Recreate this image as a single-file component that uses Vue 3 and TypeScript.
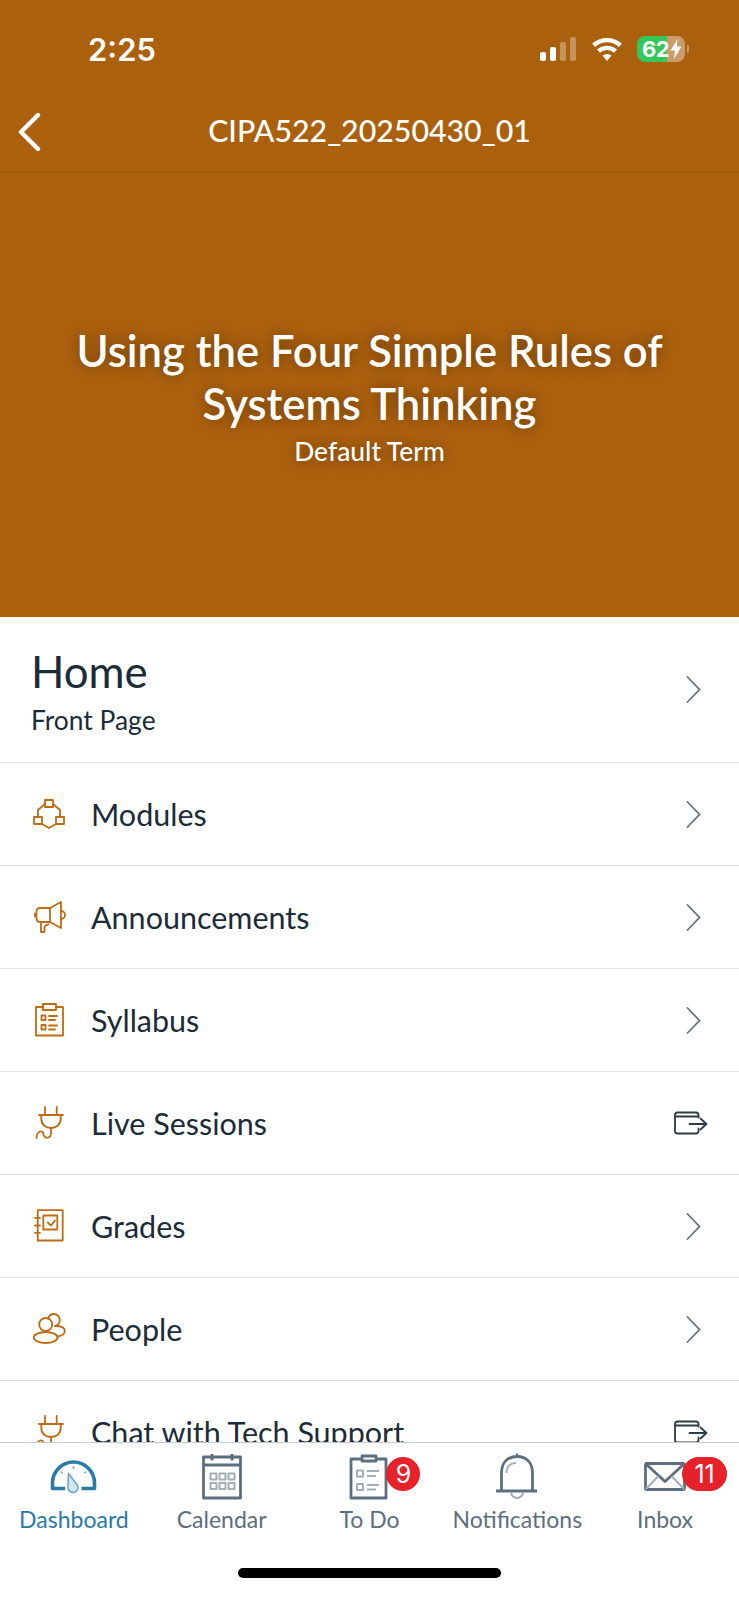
<template>
  <div class="screen">
    <header class="course-head">
      <!-- 状态栏 -->
      <div class="status-bar">
        <span class="clock">2:25</span>
        <div class="status-icons">
          <div class="signal">
            <i class="bar b1"></i>
            <i class="bar b2"></i>
            <i class="bar b3 dim"></i>
            <i class="bar b4 dim"></i>
          </div>
          <svg class="wifi" viewBox="0 0 32 24" width="32" height="24">
            <path d="M16 24 L11.5 18.6 A7 7 0 0 1 20.5 18.6 Z" fill="#fff" />
            <path d="M7.5 14.2 A12.4 12.4 0 0 1 24.5 14.2" class="wifi-arc" />
            <path d="M2.6 8.4 A19.6 19.6 0 0 1 29.4 8.4" class="wifi-arc" />
          </svg>
          <div class="battery">
            <span class="battery-num">62</span>
            <svg class="bolt" viewBox="0 0 12 20" width="12" height="20">
              <path d="M7.5 0 L0.5 11.5 H5 L4 20 L11.5 7.5 H6.8 Z" fill="#fff" />
            </svg>
          </div>
          <i class="battery-nub"></i>
        </div>
      </div>

      <!-- 导航栏 -->
      <nav class="nav-bar">
        <svg class="back" viewBox="0 0 26 40" width="26" height="40">
          <path d="M22 3 L5 20 L22 37" />
        </svg>
        <span class="nav-title">CIPA522_20250430_01</span>
      </nav>

      <div class="hero">
        <h1 class="hero-title">Using the Four Simple Rules of Systems Thinking</h1>
        <p class="hero-term">Default Term</p>
      </div>
    </header>

    <main class="menu">
      <div class="home-row">
        <div class="home-text">
          <div class="home-title">Home</div>
          <div class="home-sub">Front Page</div>
        </div>
        <svg class="chevron" viewBox="0 0 15 27" width="15" height="27">
          <path d="M1.5 1 L13.5 13.5 L1.5 26" />
        </svg>
      </div>

      <div v-for="row in rows" :key="row.label" class="menu-row">
        <svg class="row-icon" viewBox="0 0 36 36" width="36" height="36">
          <path v-for="d in row.icon" :key="d" :d="d" />
        </svg>
        <span class="row-label">{{ row.label }}</span>
        <svg v-if="row.external" class="external" viewBox="0 0 34 24" width="34" height="24">
          <path d="M24.5 6.5 V4 Q24.5 1.5 22 1.5 H3.5 Q1 1.5 1 4 V20 Q1 22.5 3.5 22.5 H22 Q24.5 22.5 24.5 20 V17.5" />
          <path d="M1 5.5 H24.5" />
          <path d="M15.5 13 H32" />
          <path d="M26.5 7.5 L32.5 13 L26.5 18.5" />
        </svg>
        <svg v-else class="chevron" viewBox="0 0 15 27" width="15" height="27">
          <path d="M1.5 1 L13.5 13.5 L1.5 26" />
        </svg>
      </div>
    </main>

    <footer class="tab-bar">
      <div class="tabs">
        <div v-for="tab in tabs" :key="tab.label" class="tab" :class="{ active: tab.active }">
          <svg class="tab-icon" viewBox="0 0 60 50" width="60" height="50">
            <path v-for="p in tab.paths" :key="p.d" :d="p.d" :class="p.cls" />
          </svg>
          <span class="tab-label">{{ tab.label }}</span>
          <span v-if="tab.badge" class="badge" :class="{ wide: tab.badge > 9 }">{{ tab.badge }}</span>
        </div>
      </div>
      <div class="home-indicator"></div>
    </footer>
  </div>
</template>

<script setup lang="ts">
interface MenuRow {
  label: string
  icon: string[]
  external?: boolean
}

interface TabPath {
  d: string
  cls: string
}

interface Tab {
  label: string
  active?: boolean
  badge?: number
  paths: TabPath[]
}

const plugIcon = [
  'M14 2 V10',
  'M25.7 2 V10',
  'M8 10 H32',
  'M10.3 10 V14 C10.3 20 15 23 20 23 C25 23 29.7 20 29.7 14 V10',
  'M20 23 V28 C20 34 13 34 12.5 29 C12 25 6 25 5.5 33'
]

const rows: MenuRow[] = [
  {
    label: 'Modules',
    icon: [
      'M14 4 H22 V11 H14 Z',
      'M3 21 H11 V28 H3 Z',
      'M25 21 H33 V28 H25 Z',
      'M14 8 L7 14 V21',
      'M22 8 L29 14 V21',
      'M11 28 L18 32 L25 28'
    ]
  },
  {
    label: 'Announcements',
    icon: [
      'M19 9 H9 Q5.5 9 5.5 13 V19 Q5.5 23 9 23 H19 Z',
      'M19 9 L30 3 V29 L19 23',
      'M10 23 V33 H13.5 V29 Q13.5 26 17.5 25.5',
      'M30 12 A4 4 0 0 1 30 20',
      'M4 14.5 V17.5'
    ]
  },
  {
    label: 'Syllabus',
    icon: [
      'M12 5 H5 V33.5 H32 V5 H25',
      'M12 2 H25 V8 H12 Z',
      'M10.5 13.5 H14.5 V18 H10.5 Z',
      'M10.5 23 H14.5 V27.5 H10.5 Z',
      'M18 14 H26',
      'M18 18 H24',
      'M18 23.5 H26',
      'M18 27.5 H24'
    ]
  },
  { label: 'Live Sessions', icon: plugIcon, external: true },
  {
    label: 'Grades',
    icon: [
      'M6.7 2.2 H31.7 V32.5 H6.7 Z',
      'M12.3 7.5 H26.3 V21.5 H12.3 Z',
      'M4 9.8 H9',
      'M4 17.5 H9',
      'M4 24.8 H9',
      'M16.7 14.5 L20 17.5 L24 12.5'
    ]
  },
  {
    label: 'People',
    icon: [
      'M21.2 13.5 A6.5 6.5 0 1 1 8.2 13.5 A6.5 6.5 0 1 1 21.2 13.5 Z',
      'M14.7 21 C21 21 26.7 23.5 26.7 26.5 C26.7 29.5 21 32 14.7 32 C8.4 32 2.7 29.5 2.7 26.5 C2.7 23.5 8.4 21 14.7 21 Z',
      'M17 7.5 C18 4.5 20.5 3 23 3 C26.5 3 28.8 5.8 28.8 9 C28.8 12 27 14 24.5 14.8',
      'M24 15 C30 15 33.8 17 33.8 20 C33.8 23 30 25 26 25.6'
    ]
  },
  { label: 'Chat with Tech Support', icon: plugIcon, external: true }
]

const tabs: Tab[] = [
  {
    label: 'Dashboard',
    active: true,
    paths: [
      { d: 'M21 36.5 H8.5 V31 A21 21 0 0 1 50.5 31 V36.5 H37.5', cls: 'heavy arc' },
      { d: 'M29.5 14 V17', cls: 'tick' },
      { d: 'M17 19.5 L18.8 21.5', cls: 'tick' },
      { d: 'M42 19.5 L40.2 21.5', cls: 'tick' },
      { d: 'M24.5 21.5 L33.6 33.5 A5 5 0 1 1 24 35 Z', cls: 'needle' }
    ]
  },
  {
    label: 'Calendar',
    paths: [
      { d: 'M11.5 5 H48.5 V46 H11.5 Z', cls: 'heavy' },
      { d: 'M11.5 13 H48.5', cls: 'heavy' },
      { d: 'M20 2 V8.5', cls: 'heavy' },
      { d: 'M40 2 V8.5', cls: 'heavy' },
      { d: 'M18.5 21.5 H24.5 V27.5 H18.5 Z', cls: 'soft' },
      { d: 'M27.5 21.5 H33.5 V27.5 H27.5 Z', cls: 'soft' },
      { d: 'M36.5 21.5 H42.5 V27.5 H36.5 Z', cls: 'soft' },
      { d: 'M18.5 31 H24.5 V37 H18.5 Z', cls: 'soft' },
      { d: 'M27.5 31 H33.5 V37 H27.5 Z', cls: 'soft' },
      { d: 'M36.5 31 H42.5 V37 H36.5 Z', cls: 'soft' }
    ]
  },
  {
    label: 'To Do',
    badge: 9,
    paths: [
      { d: 'M23 7 H12 V46 H47 V7 H37', cls: 'heavy' },
      { d: 'M23 7 V4 H37 V9 H23 Z', cls: 'heavy' },
      { d: 'M18 18.5 H24 V24.5 H18 Z', cls: 'soft' },
      { d: 'M18 32 H24 V38 H18 Z', cls: 'soft' },
      { d: 'M28 19 H40', cls: 'soft' },
      { d: 'M28 24 H37', cls: 'soft' },
      { d: 'M28 33 H40', cls: 'soft' },
      { d: 'M28 37.5 H37', cls: 'soft' }
    ]
  },
  {
    label: 'Notifications',
    paths: [
      { d: 'M9 39 H50', cls: 'heavy' },
      { d: 'M14.5 39 V21 C14.5 10 21 4.5 30 4.5 C39 4.5 45.5 10 45.5 21 V39', cls: 'heavy' },
      { d: 'M30 1.5 V4', cls: 'thin' },
      { d: 'M19.5 21 C19.5 15 23 11 29 11', cls: 'soft' },
      { d: 'M24 40 A6 6 0 0 0 36 40', cls: 'soft' }
    ]
  },
  {
    label: 'Inbox',
    badge: 11,
    paths: [
      { d: 'M12 11.5 H48 Q49.5 11.5 49.5 13 V36 Q49.5 37.5 48 37.5 H12 Q10.5 37.5 10.5 36 V13 Q10.5 11.5 12 11.5 Z', cls: 'heavy' },
      { d: 'M11 12 L30 29.5 L49 12', cls: 'heavy' },
      { d: 'M11 37 L23.5 24', cls: 'soft' },
      { d: 'M49 37 L36.5 24', cls: 'soft' }
    ]
  }
]
</script>

<style scoped>
.screen {
  width: 739px;
  height: 1600px;
  display: flex;
  flex-direction: column;
  overflow: hidden;
  background: #ffffff;
  font-family: Lato, 'Noto Sans', sans-serif;
}

/* 顶部棕色区域 */
.course-head {
  background: #ab600e;
  color: #ffffff;
  flex-shrink: 0;
}

.status-bar {
  height: 98px;
  display: flex;
  align-items: center;
  justify-content: space-between;
  padding: 0 50px 0 88px;
}

.clock {
  font-family: Inter, 'Liberation Sans', sans-serif;
  font-size: 31px;
  font-weight: 600;
}

.status-icons {
  display: flex;
  align-items: center;
}

.signal {
  display: flex;
  align-items: flex-end;
  gap: 4px;
  height: 24px;
  margin-right: 15px;
}

.bar {
  width: 6px;
  background: #ffffff;
  border-radius: 2px;
}

.bar.dim {
  background: rgba(255, 255, 255, 0.32);
}

.b1 { height: 9px; }
.b2 { height: 14px; }
.b3 { height: 19px; }
.b4 { height: 24px; }

.wifi-arc {
  fill: none;
  stroke: #ffffff;
  stroke-width: 4.4;
}

.battery {
  width: 48px;
  height: 26px;
  margin-left: 14px;
  border-radius: 8px;
  display: flex;
  align-items: center;
  padding-left: 5px;
  box-sizing: border-box;
  background: linear-gradient(to right, #34c759 0, #34c759 30px, rgba(255, 255, 255, 0.38) 30px);
}

.battery-num {
  font-family: Inter, 'Liberation Sans', sans-serif;
  font-size: 22px;
  font-weight: 700;
  line-height: 1;
  letter-spacing: -0.5px;
}

.bolt {
  margin-left: 1px;
}

.battery-nub {
  width: 2px;
  height: 8px;
  margin-left: 2px;
  border-radius: 0 2px 2px 0;
  background: rgba(255, 255, 255, 0.38);
}

.nav-bar {
  height: 75px;
  box-sizing: border-box;
  border-bottom: 1px solid #9c5710;
  padding-bottom: 10px;
  display: flex;
  align-items: center;
  justify-content: center;
  position: relative;
}

.back {
  position: absolute;
  left: 16px;
  top: 14px;
  fill: none;
  stroke: #ffffff;
  stroke-width: 4.4;
  stroke-linecap: round;
  stroke-linejoin: round;
}

.nav-title {
  font-size: 30.3px;
  font-weight: 500;
}

.hero {
  height: 444px;
  box-sizing: border-box;
  padding: 151px 40px 0;
  text-align: center;
  text-shadow: 0 0 14px rgba(0, 0, 0, 0.4);
}

.hero-title {
  margin: 0;
  font-size: 43.6px;
  line-height: 53px;
  font-weight: 600;
}

.hero-term {
  margin: 3px 0 0;
  font-size: 26.4px;
  line-height: 36px;
  font-weight: 500;
}

/* 菜单列表 */
.menu {
  flex: 1;
  min-height: 0;
  overflow: hidden;
}

.home-row {
  height: 146px;
  box-sizing: border-box;
  border-bottom: 1px solid #dfe1e3;
  display: flex;
  align-items: center;
  justify-content: space-between;
  padding: 0 38px 0 31px;
  color: #1c2b38;
}

.home-text {
  padding-top: 4px;
}

.home-title {
  font-size: 43.8px;
  line-height: 52px;
}

.home-sub {
  margin-top: 4px;
  font-size: 26.4px;
  line-height: 38px;
}

.menu-row {
  height: 103px;
  box-sizing: border-box;
  border-bottom: 1px solid #dfe1e3;
  display: flex;
  align-items: center;
  padding: 0 38px 0 31px;
}

.row-icon {
  flex-shrink: 0;
  fill: none;
  stroke: #bb6c14;
  stroke-width: 1.8;
  stroke-linejoin: round;
  stroke-linecap: round;
}

.row-label {
  flex: 1;
  margin-left: 24px;
  font-size: 30.5px;
  color: #1c2b38;
}

.chevron {
  fill: none;
  stroke: #66747f;
  stroke-width: 1.8;
  stroke-linecap: round;
}

.external {
  margin-right: -7px;
  fill: none;
  stroke: #2d3b45;
  stroke-width: 1.8;
  stroke-linecap: round;
  stroke-linejoin: round;
}

/* 底部标签栏 */
.tab-bar {
  height: 158px;
  flex-shrink: 0;
  box-sizing: border-box;
  border-top: 1px solid #c7cbcf;
  background: #ffffff;
  display: flex;
  flex-direction: column;
  align-items: center;
}

.tabs {
  width: 100%;
  display: grid;
  grid-template-columns: repeat(5, 1fr);
  padding-top: 9px;
}

.tab {
  position: relative;
  display: flex;
  flex-direction: column;
  align-items: center;
  color: #5d6e7e;
}

.tab.active {
  color: #2a7ba6;
}

.tab-icon {
  fill: none;
  stroke-linejoin: round;
}

.tab-label {
  font-size: 23px;
  line-height: 34px;
}

.heavy {
  stroke: currentColor;
  stroke-width: 2.8;
}

.heavy.arc {
  stroke-width: 3.6;
}

.thin {
  stroke: currentColor;
  stroke-width: 2;
}

.soft {
  stroke: #a3aeb8;
  stroke-width: 2;
}

.tick {
  stroke: #8ab6cf;
  stroke-width: 1.8;
}

.needle {
  fill: #d3e5ef;
  stroke: #6fa8c7;
  stroke-width: 1.6;
}

.badge {
  position: absolute;
  top: 5px;
  left: calc(50% + 17px);
  min-width: 34px;
  height: 34px;
  box-sizing: border-box;
  border-radius: 17px;
  background: #e6212a;
  color: #ffffff;
  font-family: Inter, 'Liberation Sans', sans-serif;
  font-size: 25px;
  line-height: 34px;
  text-align: center;
}

.badge.wide {
  width: 45px;
}

.home-indicator {
  width: 263px;
  height: 10px;
  margin-top: 32px;
  border-radius: 5px;
  background: #000000;
}
</style>
